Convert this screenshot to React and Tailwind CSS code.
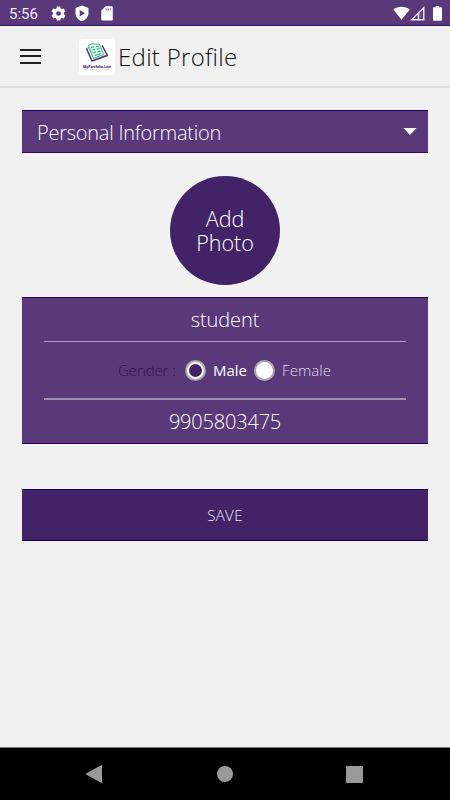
import React, { useState } from 'react';

const StatusBar = () => (
  <div className="h-[26px] bg-[#593979] border-b border-[#3a1466] flex items-center text-white">
    <span className="ml-[9px] w-[42px] mt-[3px] font-[Roboto] text-[15px] leading-none text-[#f0ebf5]">5:56</span>
    <svg className="w-[17px] h-[17px] -ml-px mt-px" viewBox="0.500 0.500 23 23" fill="currentColor">
      <path d="M19.14 12.94c.04-.3.06-.61.06-.94s-.02-.64-.07-.94l2.03-1.58a.49.49 0 0 0 .12-.61l-1.92-3.32a.49.49 0 0 0-.59-.22l-2.39.96a7 7 0 0 0-1.62-.94l-.36-2.54a.48.48 0 0 0-.48-.41h-3.84a.48.48 0 0 0-.47.41l-.36 2.54c-.59.24-1.13.57-1.62.94l-2.39-.96a.48.48 0 0 0-.59.22L2.74 8.87a.48.48 0 0 0 .12.61l2.03 1.58a7 7 0 0 0 0 1.88l-2.03 1.58a.49.49 0 0 0-.12.61l1.92 3.32c.12.22.37.29.59.22l2.39-.96c.5.38 1.03.7 1.62.94l.36 2.54c.05.24.24.41.48.41h3.84c.24 0 .44-.17.47-.41l.36-2.54a7 7 0 0 0 1.62-.94l2.39.96c.22.08.47 0 .59-.22l1.92-3.32a.48.48 0 0 0-.12-.61zM12 15.2a3.2 3.2 0 1 1 0-6.4 3.200 3.200 0 0 1 0 6.400z" />
    </svg>
    <svg className="w-[14px] h-[17px] ml-[8px] mt-px" viewBox="0 0 14 17" fill="currentColor">
      <path fillRule="evenodd" d="M7 .5.5 3v5c0 4 2.800 7 6.500 8.200 3.700-1.200 6.500-4.200 6.500-8.200V3zM4.700 4.900 10 8.200l-5.300 3.300z" />
    </svg>
    <svg className="w-[12px] h-[15px] ml-[12px] mt-px" viewBox="0 0 12 15">
      <path d="M4.500.3H10.800a1 1 0 0 1 1 1v12.200a1 1 0 0 1-1 1H1.300a1 1 0 0 1-1-1V4.500z" fill="currentColor" />
      <path d="M4.700 2.200h1.200v2.300H4.700zM6.800 2.200H8v2.300H6.800zM8.900 2.200h1.200v2.300H8.900z" fill="#8f79a5" />
    </svg>
    <div className="flex items-center ml-auto mr-[8px] mt-px">
      <svg className="w-[17px] h-[14px]" viewBox="0 0 17 14" fill="currentColor">
        <path d="M.3 3.500C5-.3 12-.3 16.700 3.500L8.500 13.700z" />
      </svg>
      <svg className="w-[15px] h-[15px]" viewBox="0 0 15 15" fill="none">
        <path fillRule="evenodd" d="M0 14.500 14.500 0v14.500zM3.400 13H7.800V8.600zM9.300 7.100V13H13V3.400z" fill="#e9e3ef" />
        <path d="M11.200 6.500v5" stroke="#8f79a5" strokeWidth=".8" />
      </svg>
      <svg className="w-[9px] h-[15px] ml-[8px]" viewBox="0 0 9 15" fill="currentColor">
        <path d="M2.800 0h3.400v1.300H8.200a.8.8 0 0 1 .8.8v11.800a.8.8 0 0 1-.8.8H.8a.8.8 0 0 1-.8-.8V2.100a.8.800 0 0 1 .8-.8h2z" />
      </svg>
    </div>
  </div>
);

const Logo = () => (
  <svg className="w-[36px] h-[36px] shrink-0 overflow-visible" viewBox="0 0 36 36">
    <rect width="36" height="36" rx="4" fill="#fff" />
    <path d="M7.500 9.500 13 22 28.500 16.500 23 6.500" fill="#fff" stroke="#4d2d80" strokeWidth="1.500" strokeLinejoin="round" />
    <path d="M7.500 9.500 10 8.500M10 9l5 11.500 12.500-4.500" fill="none" stroke="#6b4c99" strokeWidth=".7" />
    <path d="M9.500 6.500 12 5h8.500l4 10.500-10 3.800z" fill="#e4f9ee" stroke="#2fc580" strokeWidth="1" />
    <path d="m11.800 8.500 3.400-.5M17 7.500l3-.4M12.800 11l3.200-.6M17.500 10l3.200-.5M14 14l3-.8M18.500 12.800l3-.7M15.500 16.800l6-2" stroke="#2fbd7a" strokeWidth="1.200" />
    <text x="4" y="28.500" fontFamily="Open Sans, sans-serif" fontWeight="800" fontSize="3.800" textLength="28" lengthAdjust="spacingAndGlyphs" fill="#4b2482">MyPortfolio.Live</text>
    <path d="M5 30.500h26" stroke="#c9c5d1" strokeWidth=".6" strokeDasharray="1.200 .8" />
  </svg>
);

const Header = () => (
  <header className="h-[62px] bg-[#f0f0f0] border-b-2 border-[#e0e0e0] flex items-center">
    <button className="ml-[20px] w-[21px] h-[15px] flex flex-col justify-between">
      <span className="block w-full h-[2px] bg-[#202020]" />
      <span className="block w-full h-[2px] bg-[#202020]" />
      <span className="block w-full h-[2px] bg-[#202020]" />
    </button>
    <div className="ml-[38px] mt-px">
      <Logo />
    </div>
    <h1 className="ml-[3px] mt-[2px] text-[24px] leading-[32px] font-light tracking-[0.3px] text-[#111] whitespace-nowrap">Edit Profile</h1>
  </header>
);

const Radio = ({ label, checked, onSelect, className }) => (
  <button onClick={onSelect} className={`flex items-center ${className}`}>
    <span className="w-[21px] h-[21px] rounded-full border-2 border-[#aaa5a8] bg-white flex items-center justify-center shrink-0">
      {checked && <span className="w-[13px] h-[13px] rounded-full bg-[#432367]" />}
    </span>
    <span className={checked ? 'ml-[7px] text-white font-medium' : 'ml-[7px] text-[#e2daea] font-light tracking-[0.1px]'}>
      {label}
    </span>
  </button>
);

const NavBar = () => (
  <nav className="h-[53px] bg-black border-t border-[#777] flex items-center justify-between pl-[85px] pr-[87px]">
    <svg className="w-[18px] h-[20px]" viewBox="0 0 18 20" fill="#999">
      <path d="M16 1.200a.7.7 0 0 1 1 .6v16.400a.7.7 0 0 1-1 .6L1.200 10.600a.7.700 0 0 1 0-1.200z" />
    </svg>
    <span className="w-[16px] h-[16px] rounded-full bg-[#999]" />
    <span className="w-[17px] h-[17px] rounded-[1px] bg-[#999]" />
  </nav>
);

const App = () => {
  const [gender, setGender] = useState('male');

  return (
    <div className="w-[450px] h-[800px] bg-[#f1f1f1] flex flex-col overflow-hidden font-['Open_Sans',sans-serif]">
      <StatusBar />
      <Header />

      <main className="flex-1 px-[22px] pt-[22px]">
        <button className="w-full h-[43px] bg-[#593979] border-t border-b border-t-[#160060] border-b-[#3f006b] flex items-center justify-between pl-[15px] pr-[11px]">
          <span className="mt-[2px] text-[20px] leading-none font-light tracking-[-0.25px] text-white whitespace-nowrap">Personal Information</span>
          <svg className="w-[14px] h-[7px]" viewBox="0 0 14 7" fill="#fff">
            <path d="M.5 0h13L7 7z" />
          </svg>
        </button>

        <button className="mt-[23px] mx-auto w-[110px] h-[109px] rounded-full bg-[#432367] flex flex-col items-center justify-center text-[21.5px] leading-[24px] font-light text-white">
          <p className="whitespace-pre-line text-center">{'Add\nPhoto'}</p>
        </button>

        <section className="mt-[12px] h-[147px] bg-[#593979] border-y border-[#26005c] px-[22px] text-center">
          <div className="h-[44px] border-b border-[#ad9dba] flex items-center justify-center text-[20px] leading-none font-light tracking-[-0.1px] text-white">
            student
          </div>
          <div className="h-[58px] border-b-2 border-[#a08fae] flex items-center pl-[74px] text-[15px] leading-none">
            <span className="w-[67px] text-left font-light tracking-[-0.1px] text-[#2e1745]">Gender :</span>
            <Radio className="w-[69px]" label="Male" checked={gender === 'male'} onSelect={() => setGender('male')} />
            <Radio className="" label="Female" checked={gender === 'female'} onSelect={() => setGender('female')} />
          </div>
          <div className="h-[43px] pt-px flex items-center justify-center text-[20px] leading-none font-light tracking-[-0.2px] text-white">
            9905803475
          </div>
        </section>

        <button className="mt-[45px] w-full h-[52px] bg-[#432367] border-y border-[#12005c] text-[15px] leading-none font-light tracking-[0.4px] text-[#f1ecf6]">
          SAVE
        </button>
      </main>

      <NavBar />
    </div>
  );
};

export default App;
